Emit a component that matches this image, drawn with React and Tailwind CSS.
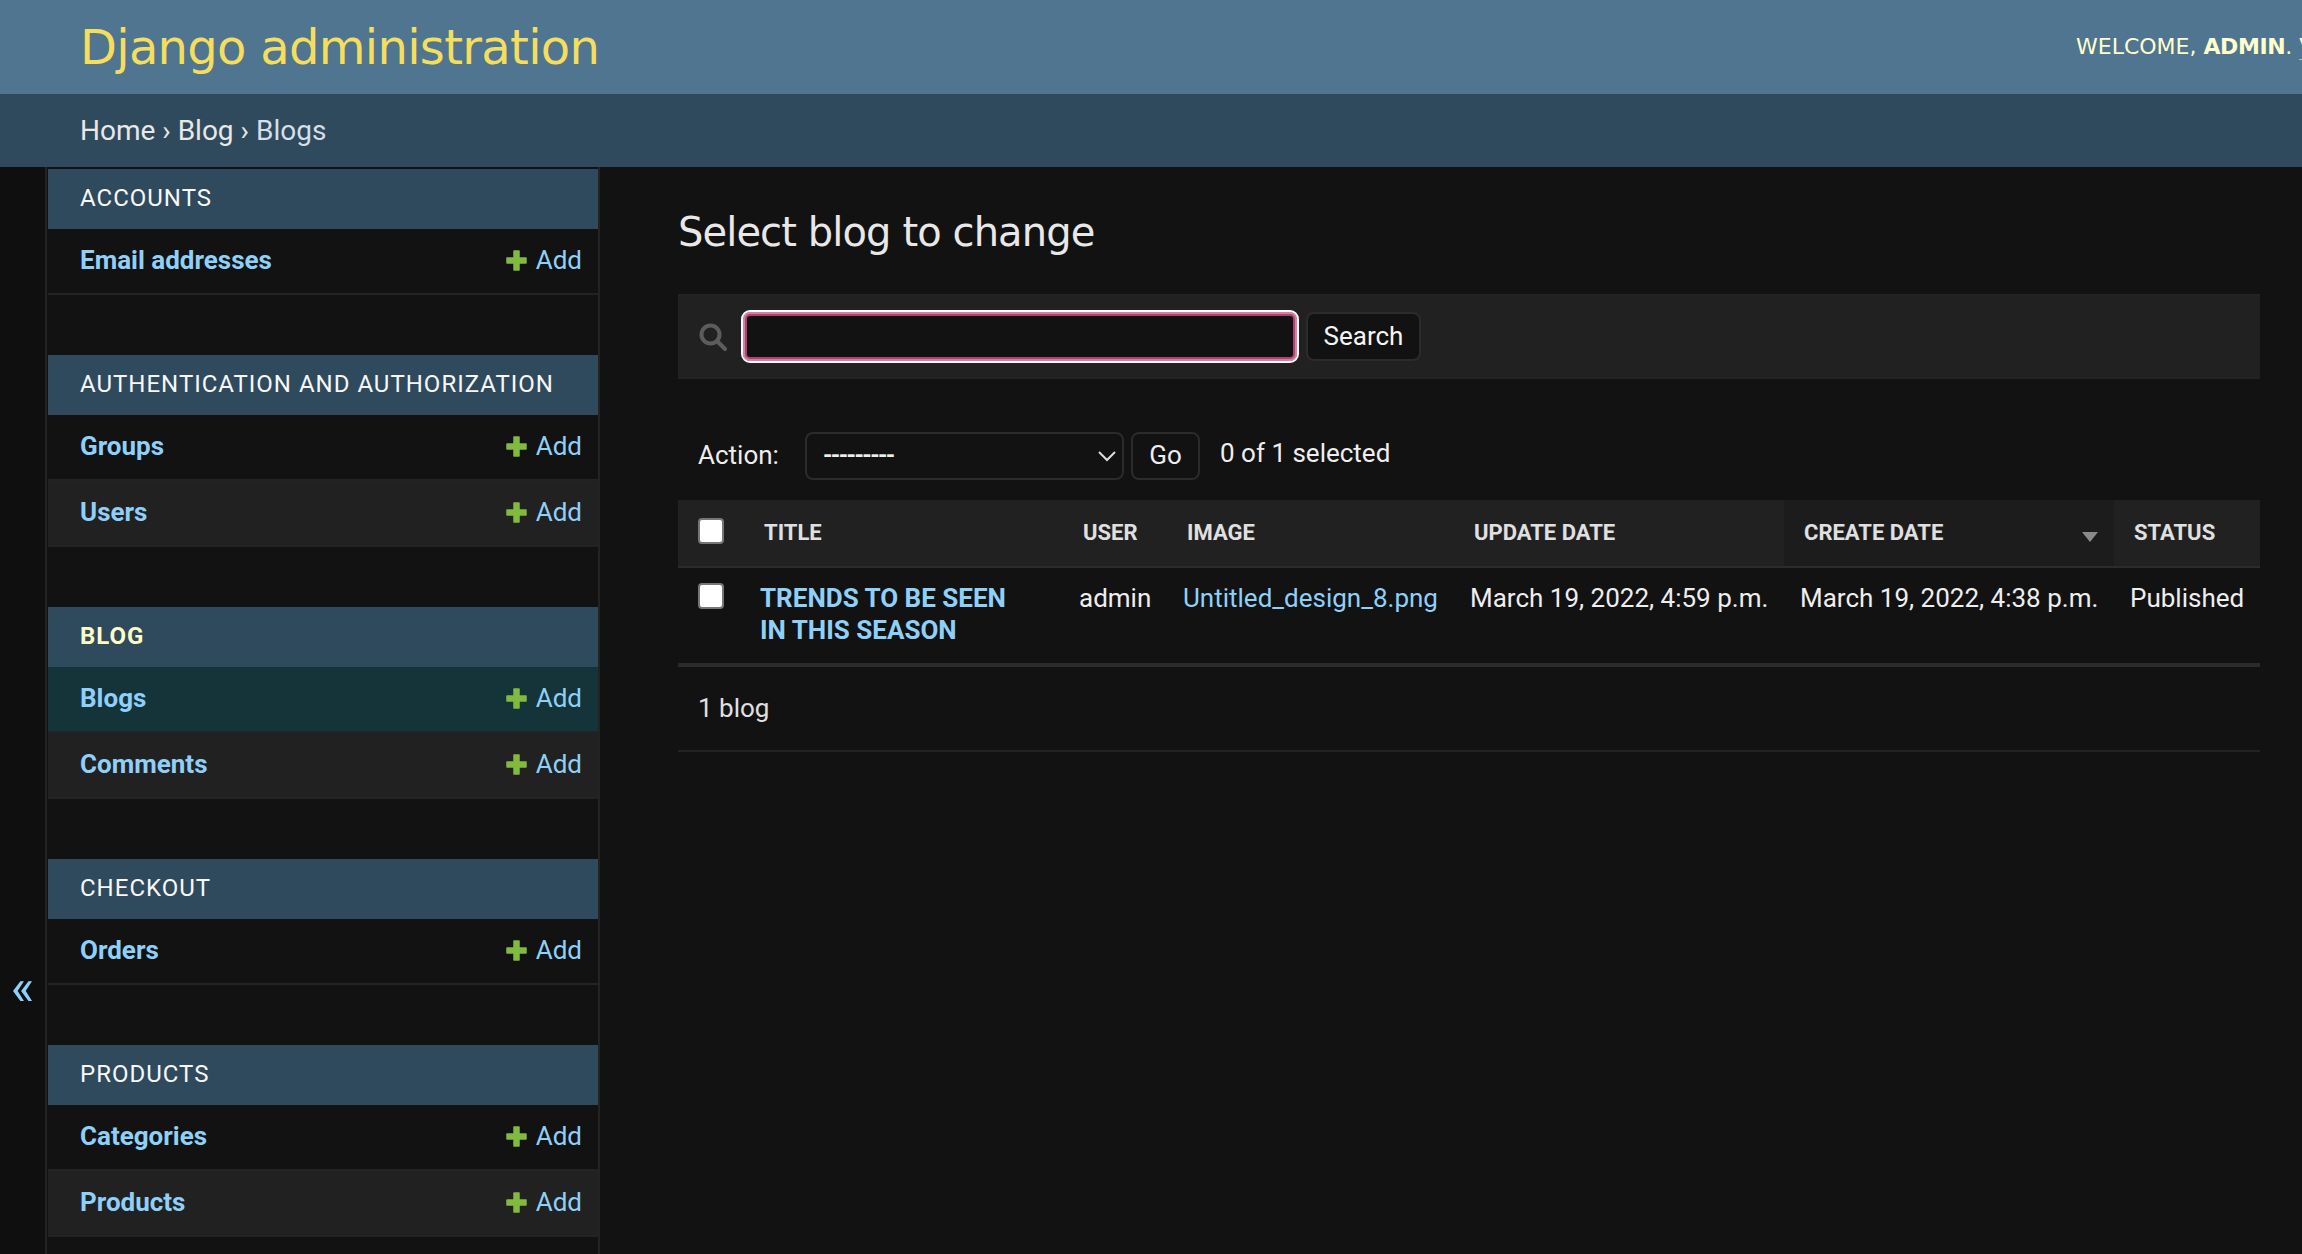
import React from "react";

const font = "font-['Roboto',sans-serif]";
const titleFont = "font-['DejaVu_Sans',sans-serif]";

const modules = [
  { name: "Accounts", rows: ["Email addresses"] },
  { name: "Authentication and Authorization", rows: ["Groups", "Users"] },
  { name: "Blog", current: true, rows: ["Blogs", "Comments"] },
  { name: "Checkout", rows: ["Orders"] },
  { name: "Products", rows: ["Categories", "Products"] },
];

function PlusIcon() {
  return (
    <svg width="21" height="21" viewBox="0 0 21 21" className="mr-[9px]">
      <path d="M8 1h5v7h7v5h-7v7H8v-7H1V8h7z" fill="#82b940" stroke="#82b940" strokeWidth="1.5" strokeLinejoin="round" />
    </svg>
  );
}

function SidebarRow({ label, index, active }) {
  let bg = index % 2 === 1 ? "bg-[#212121]" : "bg-[#121212]";
  if (active) bg = "bg-[#14343a]";
  return (
    <div className={`flex h-[66px] items-center justify-between border-b-2 border-[#232323] pb-[2px] pl-8 pr-4 ${bg}`}>
      <span className="text-[26px] font-bold text-[#8fd0f8]">{label}</span>
      <span className="flex items-center text-[26px] text-[#8fd0f8]">
        <PlusIcon />
        Add
      </span>
    </div>
  );
}

function Sidebar() {
  return (
    <aside className="flex w-[600px] shrink-0">
      <div className="flex w-[47px] shrink-0 justify-center border-r-2 border-[#232323] bg-[#0f0f0f] pt-[796px]">
        <span className="text-[50px] leading-none text-[#8fd0f8]">«</span>
      </div>
      <div className="flex w-[551px] flex-col gap-[60px] pl-px pt-[2px]">
        {modules.map((m) => (
          <section key={m.name}>
            <div
              className={`flex h-[60px] items-center bg-[#2f4a5d] pb-[2px] pl-8 text-[24px] uppercase tracking-[1px] ${
                m.current ? "font-bold text-[#fdfdc4]" : "text-[#f7f7f7]"
              }`}
            >
              {m.name}
            </div>
            {m.rows.map((r, i) => (
              <SidebarRow key={r} label={r} index={i} active={r === "Blogs"} />
            ))}
          </section>
        ))}
      </div>
      <div className="w-[2px] shrink-0 bg-[#232323]" />
    </aside>
  );
}

function Checkbox() {
  return <span className="block h-[26px] w-[26px] rounded-[4px] border-2 border-[#767676] bg-white" />;
}

function ChangeList() {
  const th = "px-5 pb-[2px] text-left text-[22px] font-bold uppercase text-[#e0e0e0]";
  const td = "px-4 pt-[14px] align-top text-[26px] leading-[32px]";
  return (
    <table className="w-full table-fixed border-collapse">
      <colgroup>
        <col className="w-[66px]" />
        <col className="w-[319px]" />
        <col className="w-[104px]" />
        <col className="w-[287px]" />
        <col className="w-[330px]" />
        <col className="w-[330px]" />
        <col className="w-[146px]" />
      </colgroup>
      <thead>
        <tr className="h-[67px] border-b-2 border-[#2b2b2b] bg-[#212121]">
          <th className="pb-[4px] pl-5 align-middle">
            <Checkbox />
          </th>
          <th className={th}>Title</th>
          <th className={th}>User</th>
          <th className={th}>Image</th>
          <th className={th}>Update date</th>
          <th className={`${th} relative bg-[#1c1c1c]`}>
            Create date
            <span className="absolute right-[16px] top-[32px] h-0 w-0 border-x-[8px] border-t-[10px] border-x-transparent border-t-[#8a8a8a]" />
          </th>
          <th className={th}>Status</th>
        </tr>
      </thead>
      <tbody>
        <tr className="h-[98px] border-b-4 border-[#2b2b2b]">
          <td className="pl-5 pt-[15px] align-top">
            <Checkbox />
          </td>
          <td className={`${td} pr-[50px] font-bold uppercase text-[#8fd0f8]`}>Trends to be seen in this season</td>
          <td className={`${td} text-[#eeeeee]`}>admin</td>
          <td className={`${td} whitespace-nowrap text-[#8fd0f8]`}>Untitled_design_8.png</td>
          <td className={`${td} whitespace-nowrap text-[#eeeeee]`}>March 19, 2022, 4:59 p.m.</td>
          <td className={`${td} whitespace-nowrap text-[#eeeeee]`}>March 19, 2022, 4:38 p.m.</td>
          <td className={`${td} whitespace-nowrap text-[#eeeeee]`}>Published</td>
        </tr>
      </tbody>
    </table>
  );
}

export default function App() {
  return (
    <div className={`flex h-screen flex-col overflow-hidden bg-[#121212] ${font}`}>
      <header className="flex h-[94px] shrink-0 items-center justify-between overflow-hidden bg-[#4f7590] pl-[80px]">
        <h1 className={`${titleFont} whitespace-nowrap text-[48px] font-normal tracking-[-0.7px] text-[#f5dd5d]`}>Django administration</h1>
        <div className={`${titleFont} w-[226px] shrink-0 overflow-hidden whitespace-nowrap pb-[2px] text-[22px] uppercase text-[#ffffcc]`}>
          Welcome, <strong className="tracking-[-0.4px]">admin</strong>. <span className="border-b border-[#a9bccb]">View site</span>
        </div>
      </header>

      <nav className="flex h-[73px] shrink-0 items-center bg-[#2f4a5d] pl-[80px] text-[28px] text-[#e8e8e8]">
        Home › Blog › <span className="ml-[7px] text-[#d5dfe8]">Blogs</span>
      </nav>

      <div className="flex min-h-0 flex-1">
        <Sidebar />
        <main className="flex-1 pl-[78px] pr-[42px]">
          <h2 className={`${titleFont} mt-[42px] h-[46px] text-[40px] font-normal leading-[46px] tracking-[-0.9px] text-[#e8e8e8]`}>Select blog to change</h2>

          <div className="mt-[39px] flex h-[85px] items-center border-y-2 border-[#232323] bg-[#212121] pl-[21px]">
            <svg width="28" height="28" viewBox="0 0 28 28" fill="none" stroke="#5c5c5c" strokeWidth="4" className="mr-[14px] shrink-0">
              <circle cx="11.5" cy="11.5" r="9" />
              <path d="M18 18l8 8" strokeLinecap="round" />
            </svg>
            <div className="h-[53px] w-[558px] rounded-[9px] border-2 border-white bg-[#121212] shadow-[inset_0_0_0_2px_#dc7ba3,inset_0_0_0_4px_#a8466f]" />
            <button className="ml-[7px] h-[49px] w-[115px] rounded-[8px] border-2 border-[#2b2b2b] bg-[#121212] text-[26px] text-[#f5f5f5]">Search</button>
          </div>

          <div className="mt-[53px] flex h-[48px] items-center pl-[20px] text-[26px] text-[#eeeeee]">
            <span className="w-[87px] pb-[2px]">Action:</span>
            <div className="relative ml-[20px] flex h-[48px] w-[319px] items-center rounded-[8px] border-2 border-[#2b2b2b] pb-[2px] pl-4 text-[24px] font-bold tracking-[-1.6px]">
              ---------
              <svg width="18" height="12" viewBox="0 0 18 12" fill="none" stroke="#dddddd" strokeWidth="2" className="absolute right-[6px] top-[16px]">
                <path d="M1 2l8 8 8-8" />
              </svg>
            </div>
            <button className="ml-[7px] h-[48px] w-[69px] rounded-[8px] border-2 border-[#2b2b2b] bg-[#121212] pb-[2px] text-[26px]">Go</button>
            <span className="ml-[20px] -mt-[5px]">0 of 1 selected</span>
          </div>

          <div className="mt-[20px]">
            <ChangeList />
          </div>

          <p className="flex h-[85px] items-center border-b-2 border-[#232323] pl-[20px] text-[26px] text-[#e0e0e0]">1 blog</p>
        </main>
      </div>
    </div>
  );
}
